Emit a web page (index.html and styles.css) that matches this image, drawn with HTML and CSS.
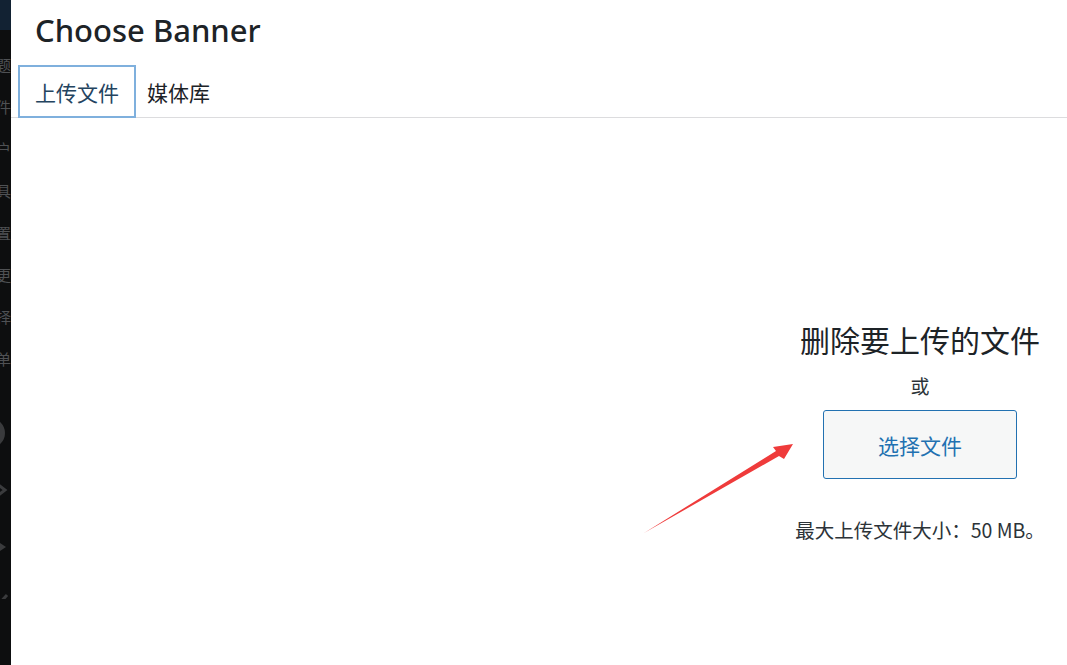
FILE: index.html
```html
<!DOCTYPE html>
<html lang="zh-CN">
<head>
	<meta charset="utf-8">
	<title>Choose Banner</title>
	<link rel="stylesheet" href="styles.css">
</head>
<body>
	<div class="adminMenu">
		<div class="menuTop"></div>
		<div class="menuItem"><span>主题</span></div>
		<div class="menuItem"><span>插件</span></div>
		<div class="menuItem"><span>用户</span></div>
		<div class="menuItem"><span>工具</span></div>
		<div class="menuItem"><span>设置</span></div>
		<div class="menuItem"><span>变更</span></div>
		<div class="menuItem"><span>选择</span></div>
		<div class="menuItem"><span>收起菜单</span></div>
		<div class="menuIcons">
			<svg width="11" height="200" viewBox="0 0 11 200">
				<circle cx="-10" cy="34" r="15" fill="#3a3b3d"/>
				<path d="M-4 84 L5 91 L-4 98" fill="none" stroke="#3a3b3d" stroke-width="3"/>
				<path d="M-6 140 L6 148 L-6 156 Z" fill="#3a3b3d"/>
				<path d="M-2 206 L7 196" fill="none" stroke="#3a3b3d" stroke-width="3"/>
			</svg>
		</div>
	</div>

	<div class="mediaFrame">
		<h1 class="frameTitle">Choose Banner</h1>
		<div class="routerTabs">
			<span class="tab active">上传文件</span>
			<span class="tab">媒体库</span>
		</div>
		<div class="uploaderArea">
			<div class="uploader">
				<h2 class="dropText">删除要上传的文件</h2>
				<p class="orText">或</p>
				<button class="selectBtn">选择文件</button>
				<p class="maxSize">最大上传文件大小：50 MB。</p>
			</div>
		</div>
	</div>

	<svg class="arrow" width="160" height="100" viewBox="0 0 160 100">
		<polygon points="153,4 133,7 136,11 4,93 139,16 144,19" fill="#ef3b3b"/>
	</svg>
</body>
</html>
```

FILE: styles.css
```css
html, body {
	margin: 0;
	height: 100%;
}

body {
	display: flex;
	font-family: "Noto Sans", "Noto Sans CJK SC", sans-serif;
	color: #1d2327;
	background: #fff;
	overflow: hidden;
}

.adminMenu {
	width: 11px;
	flex: none;
	background: #0d0e0f;
	overflow: hidden;
}

.menuTop {
	height: 30px;
	background: #122233;
	margin-bottom: 13px;
}

.menuItem {
	height: 42px;
	display: flex;
	justify-content: flex-end;
	align-items: center;
	overflow: hidden;
	white-space: nowrap;
	font-size: 15px;
	color: #4f5154;
}

.menuItem span {
	flex: none;
}

.menuIcons {
	margin-top: 20px;
}

.mediaFrame {
	flex: 1;
	display: flex;
	flex-direction: column;
}

.frameTitle {
	margin: 0;
	padding: 10px 0 0 24px;
	height: 65px;
	box-sizing: border-box;
	font-size: 31px;
	font-weight: 500;
	line-height: 40px;
	color: #1d2327;
}

.routerTabs {
	display: flex;
	padding-left: 7px;
	height: 53px;
	border-bottom: 1px solid #dcdcde;
	box-sizing: border-box;
}

.tab {
	display: flex;
	align-items: center;
	padding: 0 11px;
	height: 53px;
	box-sizing: border-box;
	font-family: "Noto Sans CJK SC", sans-serif;
	font-size: 21px;
	color: #1d2327;
}

.tab.active {
	padding: 0 15px;
	border: 2px solid #7fb0dd;
	color: #24445f;
}

.uploaderArea {
	flex: 1;
	padding-left: 759px;
}

.uploader {
	width: 300px;
	margin-top: 201px;
	text-align: center;
	font-family: "Noto Sans CJK SC", sans-serif;
}

.dropText {
	margin: 0;
	font-size: 30px;
	font-weight: 400;
	line-height: 40px;
	color: #1d2327;
}

.orText {
	margin: 13px 0 0;
	font-size: 19px;
	line-height: 28px;
	color: #2c3338;
}

.selectBtn {
	display: block;
	margin: 10px auto 0;
	width: 194px;
	height: 69px;
	border: 1px solid #2271b1;
	border-radius: 3px;
	background: #f6f7f7;
	color: #2271b1;
	font-family: "Noto Sans CJK SC", sans-serif;
	font-size: 21px;
}

.maxSize {
	margin: 38px 0 0;
	font-size: 19.5px;
	line-height: 26px;
	color: #2c3338;
}

.arrow {
	position: absolute;
	left: 640px;
	top: 440px;
}
```
